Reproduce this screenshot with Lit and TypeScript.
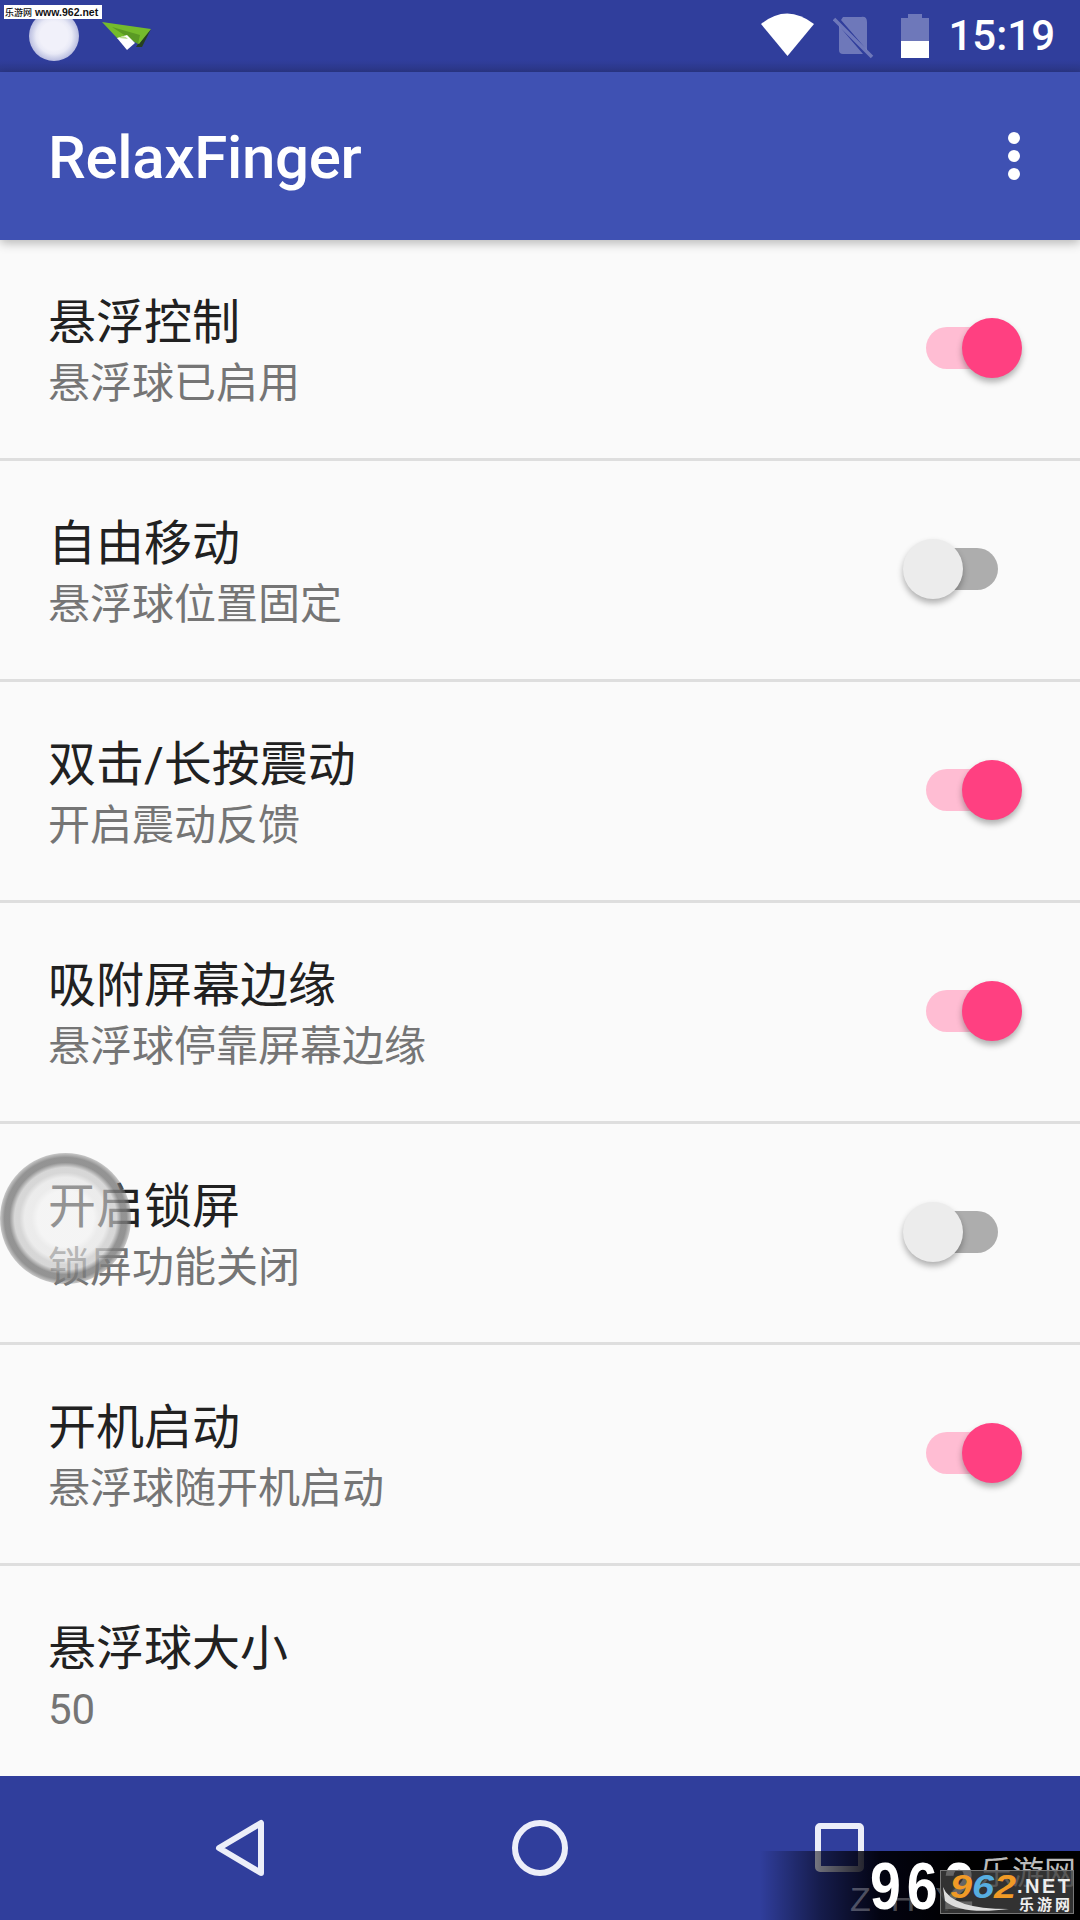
import { LitElement, html, css } from "lit";
import { customElement } from "lit/decorators.js";

const ROWS: { t: string; s: string; on?: boolean }[] = [
  { t: "悬浮控制", s: "悬浮球已启用", on: true },
  { t: "自由移动", s: "悬浮球位置固定", on: false },
  { t: "双击/长按震动", s: "开启震动反馈", on: true },
  { t: "吸附屏幕边缘", s: "悬浮球停靠屏幕边缘", on: true },
  { t: "开启锁屏", s: "锁屏功能关闭", on: false },
  { t: "开机启动", s: "悬浮球随开机启动", on: true },
  { t: "悬浮球大小", s: "50" },
];

@customElement("app-root")
export class AppRoot extends LitElement {
  static styles = css`
    :host {
      display: block;
      width: 1080px;
      height: 1920px;
      position: relative;
      overflow: hidden;
      background: #fafafa;
      font-family: Roboto, "Noto Sans CJK SC", sans-serif;
    }
    .page { display: flex; flex-direction: column; height: 1920px; }
    .status {
      height: 72px;
      flex: none;
      display: flex;
      align-items: center;
      background: linear-gradient(#303e9c 0, #303e9c 60px, #2c3889 72px);
      color: #fff;
    }
    .status svg { display: block; height: 72px; flex: none; }
    .status-ball {
      width: 50px;
      height: 50px;
      margin-left: 29px;
      border-radius: 50%;
      background: radial-gradient(circle, #f1f1fa 0 14px, #e8e9f6 18px, #d3d6ec 21px, #b9bde0 25px);
    }
    .plane { margin-left: 21px; width: 54px; }
    .spacer { flex: 1; }
    .wifi { width: 58px; }
    .nosim { width: 44px; margin-left: 15px; }
    .batt { width: 30px; margin-left: 23px; }
    .time {
      font-size: 42px;
      font-weight: 500;
      line-height: 72px;
      margin-left: 18px;
      margin-right: 25px;
    }
    .bar {
      height: 168px;
      flex: none;
      display: flex;
      align-items: center;
      justify-content: space-between;
      padding: 0 60px 0 48px;
      background: #3f51b3;
      color: #fff;
      box-shadow: 0 3px 10px rgba(0, 0, 0, 0.28);
      position: relative;
      z-index: 1;
    }
    .bar h1 { margin: 4px 0 0; font-size: 60px; font-weight: 500; line-height: 72px; letter-spacing: -0.3px; }
    .dots { display: flex; flex-direction: column; gap: 6px; }
    .dots i { display: block; width: 12px; height: 12px; border-radius: 50%; background: #fff; }
    .list { flex: 1; overflow: hidden; min-height: 0; }
    .row {
      height: 221px;
      box-sizing: border-box;
      border-bottom: 3px solid #dedede;
      display: flex;
      align-items: center;
      justify-content: space-between;
      padding: 0 58px 0 48px;
    }
    .text { padding-top: 8px; }
    .title { font-size: 48px; line-height: 62px; color: #212121; }
    .sub { font-size: 42px; line-height: 60px; color: #757575; }
    .sw { width: 120px; height: 60px; margin-bottom: 2px; display: flex; align-items: center; position: relative; flex: none; }
    .track { width: 72px; height: 42px; margin-left: 24px; border-radius: 21px; background: #adadad; }
    .thumb {
      position: absolute;
      top: 0;
      left: 1px;
      width: 60px;
      height: 60px;
      border-radius: 50%;
      background: #ececec;
      box-shadow: 0 4px 6px rgba(0, 0, 0, 0.3);
    }
    .sw.on .track { background: #ffbdd3; }
    .sw.on .thumb { left: 60px; background: #ff4081; }
    .nav {
      height: 144px;
      flex: none;
      background: #303e9c;
    }
    .nav svg { display: block; }
    .wm-top {
      position: absolute;
      left: 4px;
      top: 5px;
      width: 98px;
      height: 14px;
      background: #fff;
      color: #111;
      font-family: "Liberation Sans", "Noto Sans CJK SC", sans-serif;
      font-size: 10.5px;
      font-weight: 700;
      line-height: 14px;
      white-space: nowrap;
      text-indent: 1px;
      overflow: hidden;
    }
    .wm-top span { font-size: 9px; font-weight: 500; }
    .ball {
      position: absolute;
      left: 0;
      top: 1153px;
      width: 131px;
      height: 131px;
      border-radius: 50%;
      background: radial-gradient(circle,
        rgba(240, 240, 240, 0.55) 0 28px,
        rgba(226, 226, 226, 0.6) 34px 41px,
        rgba(198, 198, 198, 0.68) 46px 51px,
        rgba(125, 125, 125, 0.82) 56px 61px,
        rgba(125, 125, 125, 0.35) 66px);
    }
    .wm-bottom {
      position: absolute;
      left: 760px;
      top: 1851px;
      width: 320px;
      height: 69px;
      overflow: hidden;
      background: linear-gradient(90deg, rgba(0, 0, 10, 0) 0, rgba(0, 0, 10, 0.55) 60px, rgba(0, 0, 10, 0.95) 120px, #000 200px);
      font-family: "Liberation Sans", "Noto Sans CJK SC", sans-serif;
    }
    .wm-zhy {
      position: absolute;
      left: 90px;
      top: 30px;
      font-size: 34px;
      line-height: 36px;
      letter-spacing: 20px;
      color: rgba(255, 255, 255, 0.3);
      white-space: nowrap;
    }
    .wm-big {
      position: absolute;
      left: 110px;
      top: 2px;
      font-size: 66px;
      line-height: 66px;
      font-weight: 700;
      letter-spacing: 7px;
      color: #fff;
      white-space: nowrap;
      transform: scaleX(0.84);
      transform-origin: left center;
    }
    .wm-cn {
      position: absolute;
      left: 220px;
      top: 4px;
      font-size: 32px;
      line-height: 36px;
      color: #bbb;
      white-space: nowrap;
    }
    .wm-badge {
      position: absolute;
      left: 180px;
      top: 19px;
      width: 134px;
      height: 44px;
      box-sizing: border-box;
      border: 1px solid #777;
      background: rgba(62, 62, 62, 0.8);
    }
    .wm-badge svg { position: absolute; left: 0; top: 0; }
    .wm-num {
      position: absolute;
      left: 9px;
      top: 1px;
      font-size: 33px;
      line-height: 30px;
      font-weight: 700;
      font-style: italic;
      white-space: nowrap;
      transform: scaleX(1.2);
      transform-origin: left center;
    }
    .o { color: #f09a26; }
    .b { color: #57aee0; }
    .wm-net {
      position: absolute;
      left: 76px;
      top: 4px;
      font-size: 20px;
      line-height: 22px;
      font-weight: 700;
      color: #eee;
      letter-spacing: 2.5px;
      white-space: nowrap;
    }
    .wm-name {
      position: absolute;
      left: 78px;
      top: 25px;
      font-size: 15px;
      line-height: 17px;
      font-weight: 700;
      color: #eee;
      letter-spacing: 3px;
      white-space: nowrap;
    }
  `;

  render() {
    return html`
      <div class="page">
        <div class="status">
          <div class="status-ball"></div>
          <svg class="plane" viewBox="0 0 54 72">
            <path d="M38 44 L51 29 L42 47 L36 47 Z" fill="#26401f"/>
            <path d="M2 22 L51 29 L39 44 L33 41 L27 37 L18 39 Z" fill="#74bb2c"/>
            <path d="M12 27 L40 35 L38 44 Z" fill="#5a9a24"/>
            <path d="M17 38 L27 35 L35 43 L27 50 Z" fill="#fff"/>
            <path d="M19 38 Q24 34 28 39 Z" fill="#b9dc8c"/>
          </svg>
          <div class="spacer"></div>
          <svg class="wifi" viewBox="0 0 58 72">
            <path d="M1 24 Q27 3 54 24 L27.5 56 Z" fill="#fff"/>
          </svg>
          <svg class="nosim" viewBox="0 0 44 72">
            <path d="M10 17 H28 Q34 16 34 22 V50 L8 20 Z M6 26 L30 54 H10 Q6 54 6 50 Z" fill="#fff" fill-opacity="0.3"/>
            <path d="M1 19 L39 57" stroke="#fff" stroke-opacity="0.3" stroke-width="3.5"/>
          </svg>
          <svg class="batt" viewBox="0 0 30 72">
            <path d="M8 14 H22 V18 H29 V41 H1 V18 H8 Z" fill="#fff" fill-opacity="0.3"/>
            <rect x="1" y="41" width="28" height="17" fill="#fff"/>
          </svg>
          <div class="time">15:19</div>
        </div>
        <div class="bar">
          <h1>RelaxFinger</h1>
          <div class="dots"><i></i><i></i><i></i></div>
        </div>
        <div class="list">
          ${ROWS.map(
            (r) => html`
              <div class="row">
                <div class="text">
                  <div class="title">${r.t}</div>
                  <div class="sub">${r.s}</div>
                </div>
                ${r.on === undefined
                  ? ""
                  : html`<div class="sw ${r.on ? "on" : ""}"><div class="track"></div><div class="thumb"></div></div>`}
              </div>
            `
          )}
        </div>
        <div class="nav">
          <svg width="1080" height="144" viewBox="0 0 1080 144">
            <g fill="none" stroke="#eceef9" stroke-width="6" stroke-linejoin="round">
              <path d="M219 72 L261 47 V97 Z"/>
              <circle cx="540" cy="72" r="25"/>
              <rect x="818" y="50" width="43" height="43" rx="2"/>
            </g>
          </svg>
        </div>
      </div>
      <div class="ball"></div>
      <div class="wm-top"><span>乐游网</span> www.962.net</div>
      <div class="wm-bottom">
        <div class="wm-zhy">ZHY</div>
        <div class="wm-big">962</div>
        <div class="wm-cn">乐游网</div>
        <div class="wm-badge">
          <svg width="134" height="44" viewBox="0 0 134 44">
            <path d="M2 16 Q10 38 68 38 Q20 44 4 30 Z" fill="#ddd"/>
          </svg>
          <div class="wm-num"><span class="o">9</span><span class="b">6</span><span class="o">2</span></div>
          <div class="wm-net">.NET</div>
          <div class="wm-name">乐游网</div>
        </div>
      </div>
    `;
  }
}
